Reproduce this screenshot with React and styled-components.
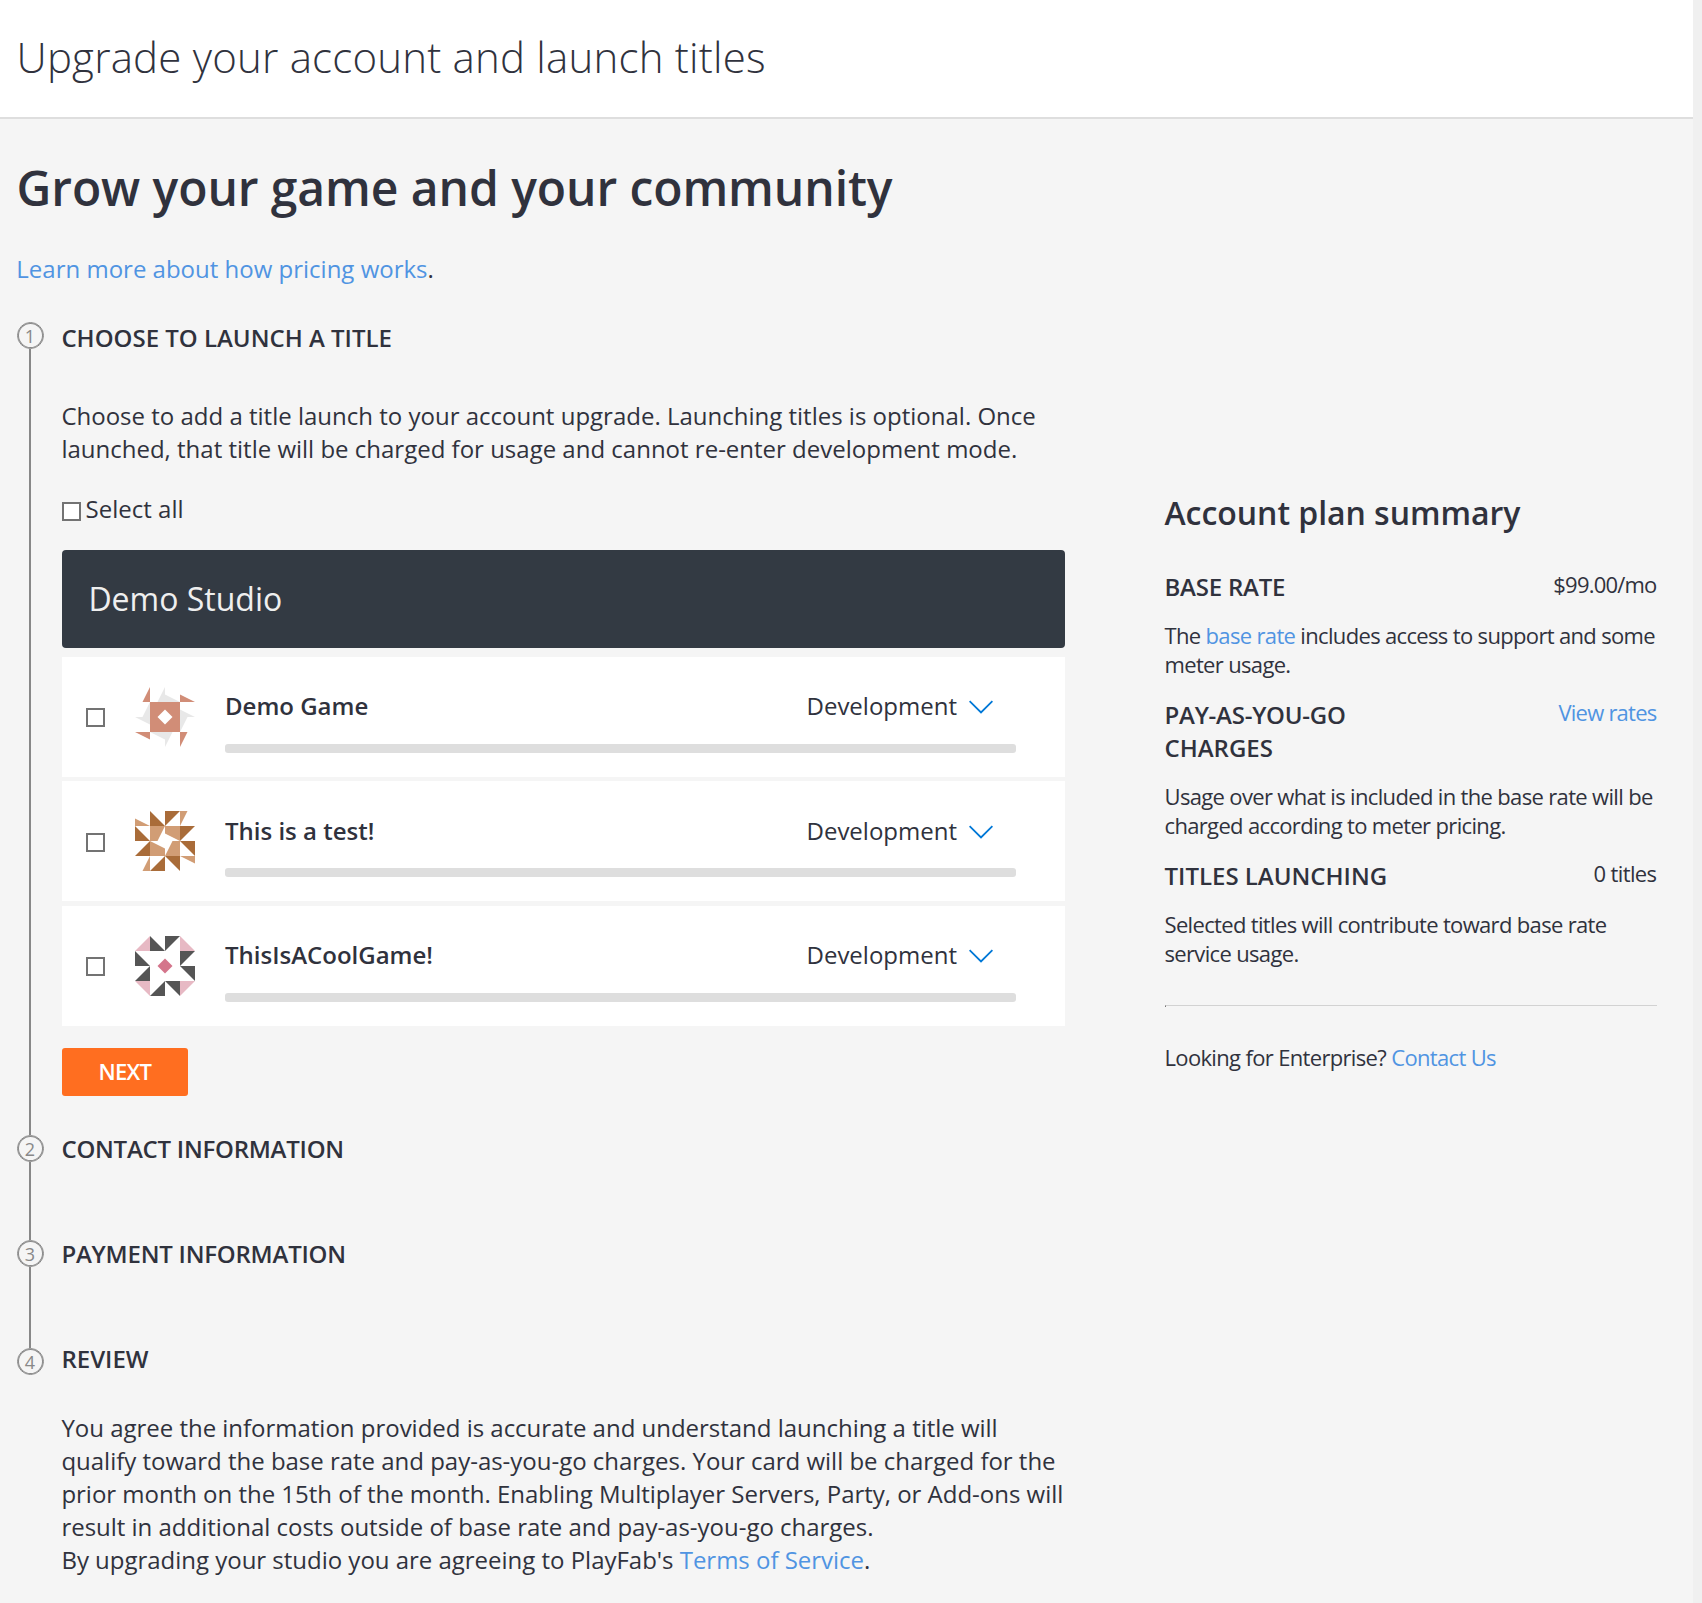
import React from 'react';
import styled, { createGlobalStyle } from 'styled-components';

const GlobalStyle = createGlobalStyle`
  *, *::before, *::after { box-sizing: border-box; }
  body {
    margin: 0;
    background: #f5f5f5;
    color: #30323d;
    font-family: "Open Sans", "Noto Sans", sans-serif;
    font-size: 24px;
    line-height: 33px;
  }
  h1, h2, h3, p { margin: 0; font-weight: 400; }
`;

const Page = styled.div`
  display: grid;
  grid-template-columns: 1693px 1fr;
  height: 1603px;
  overflow: hidden;
`;

const Gutter = styled.div`
  background: #f0f0f0;
`;

const Header = styled.header`
  height: 119px;
  padding: 28px 16.5px 0;
  background: #fff;
  border-bottom: 2px solid #dedede;
`;

const PageTitle = styled.h1`
  font-size: 42px;
  line-height: 57px;
  font-weight: 300 !important;
  letter-spacing: 0.2px;
`;

const Main = styled.main`
  padding: 36px 0 0 17px;
`;

const Headline = styled.h2`
  margin-left: -0.5px !important;
  font-size: 48px;
  line-height: 65px;
  font-weight: 600 !important;
  letter-spacing: -0.08px;
`;

const Intro = styled.p`
  margin: 32px 0 0 -0.7px !important;
`;

const Link = styled.a`
  color: #5094e2;
  text-decoration: none;
`;

const Columns = styled.div`
  display: grid;
  grid-template-columns: 1048px 492px;
  column-gap: 99.5px;
  margin-top: 37px;
`;

const Steps = styled.div`
  display: flex;
  flex-direction: column;
`;

const Step = styled.section`
  display: grid;
  grid-template-columns: 27px 1003px;
  column-gap: 18px;
  height: ${(p) => p.$height};
`;

const Rail = styled.div`
  display: flex;
  flex-direction: column;
`;

const StepNumber = styled.div`
  display: flex;
  align-items: center;
  justify-content: center;
  width: 27px;
  height: 27px;
  padding: 1px 1px 0 0;
  border: 1px solid #888;
  box-shadow: inset 0 0 0 1px #888;
  border-radius: 50%;
  color: #888;
  font-size: 18px;
  line-height: 24px;
`;

const RailLine = styled.div`
  flex: 1;
  width: 2px;
  margin-left: 12px;
  background: #888;
`;

const StepBody = styled.div`
  margin-top: ${(p) => -p.$lift}px;
`;

const StepTitle = styled.h3`
  margin-left: -0.6px !important;
  font-size: 24px;
  font-weight: 600 !important;
  letter-spacing: ${(p) => p.$tracking || 0}px;
  text-transform: uppercase;
`;

const Paragraph = styled.p`
  margin: ${(p) => p.$gap}px -4px 0 -0.6px !important;
  letter-spacing: ${(p) => p.$tracking || 0}px;
`;

const SelectAll = styled.label`
  display: flex;
  align-items: center;
  gap: 4.6px;
  margin-top: 27px;
`;

const Checkbox = styled.input.attrs({ type: 'checkbox' })`
  appearance: none;
  flex: none;
  width: 19px;
  height: 19px;
  margin: ${(p) => p.$drop || 0}px 0 0;
  border: 2px solid #737373;
  background: #fff;
`;

const Studio = styled.div`
  display: flex;
  align-items: center;
  height: 98px;
  margin-top: 25px;
  padding: 0 26.4px 2px;
  border-radius: 4px;
  background: #333a43;
  color: #efefef;
  font-size: 32px;
`;

const TitleList = styled.div`
  display: flex;
  flex-direction: column;
  gap: 4.4px;
  margin-top: 9px;
`;

const TitleRow = styled.div`
  display: flex;
  align-items: center;
  height: 120px;
  padding: 0 49px 0 24px;
  background: #fff;
`;

const Avatar = styled.svg`
  flex: none;
  width: 60px;
  height: 60px;
  margin: 0 30px;
`;

const TitleInfo = styled.div`
  flex: 1;
  padding-top: 8px;
`;

const TitleLine = styled.div`
  display: flex;
  align-items: center;
  justify-content: space-between;
  padding-right: 23px;
`;

const TitleName = styled.span`
  font-weight: 600;
`;

const Status = styled.span`
  display: flex;
  align-items: center;
  gap: 12px;
`;

const Chevron = styled.svg`
  width: 24px;
  height: 14px;
  margin-top: 3.6px;
`;

const Meter = styled.div`
  height: 9px;
  margin-top: 21.7px;
  border-radius: 3px;
  background: #dedede;
`;

const NextButton = styled.button`
  display: block;
  width: 126px;
  height: 48px;
  margin-top: 22.2px;
  padding: 0 0.4px 2px 0;
  border: 0;
  border-radius: 3px;
  background: #ff6e20;
  color: #fff;
  font: 600 22px/46px "Open Sans", "Noto Sans", sans-serif;
  letter-spacing: -0.75px;
`;

const Summary = styled.aside`
  padding-top: 170px;
  font-size: 22px;
  line-height: 29px;
  letter-spacing: -0.66px;
`;

const SummaryTitle = styled.h2`
  margin-bottom: 36px !important;
  font-size: 32px;
  line-height: 42px;
  font-weight: 600 !important;
  letter-spacing: -0.04px;
`;

const SummaryRow = styled.div`
  display: flex;
  justify-content: space-between;
`;

const SummaryLabel = styled.h3`
  max-width: 246px;
  font-size: 24px;
  line-height: 33px;
  font-weight: 600 !important;
  letter-spacing: 0;

  &::first-line {
    letter-spacing: ${(p) => p.$tracking || 0}px;
  }
`;

const SummaryValue = styled.span`
  letter-spacing: ${(p) => p.$tracking}px;
`;

const SummaryText = styled.p`
  margin: 18px 0 19px !important;
`;

const Divider = styled.hr`
  height: 2px;
  margin: 37px 0 36px;
  border-width: 1px 0 0 1px;
  border-style: solid;
  border-color: #d2d2d2 transparent transparent #777;
`;

function Shapes({ fill, points }) {
  return points.map((p) => <polygon key={p} points={p} fill={fill} />);
}

const pinwheel = [
  '15,0 15,15 30,15',
  '30,0 45,0 30,15',
  '45,15 60,15 45,30',
  '45,30 60,30 60,45',
  '30,45 45,45 45,60',
  '30,45 30,60 15,60',
  '0,15 0,30 15,30',
  '15,30 15,45 0,45',
];

const avatars = {
  coral: (
    <>
      <Shapes
        fill="#e8e8e8"
        points={[
          '30,0 30,7.5 45,15 22.5,15',
          '60,30 52.5,30 45,45 45,22.5',
          '30,60 30,52.5 15,45 37.5,45',
          '0,30 7.5,30 15,15 15,37.5',
        ]}
      />
      <Shapes
        fill="#d18d77"
        points={[
          '15,15 45,15 45,45 15,45',
          '15,0 15,15 7.5,15',
          '45,7.5 60,15 45,15',
          '45,45 52.5,45 45,60',
          '0,45 15,45 15,52.5',
        ]}
      />
      <Shapes fill="#fff" points={['30,22.5 37.5,30 30,37.5 22.5,30']} />
    </>
  ),
  brown: (
    <>
      <Shapes fill="#a96c39" points={pinwheel} />
      <Shapes
        fill="#d19d75"
        points={[
          '15,15 45,15 45,45 15,45',
          '0,7.5 0,15 15,15',
          '45,0 52.5,0 45,15',
          '45,45 60,45 60,52.5',
          '15,45 15,60 7.5,60',
        ]}
      />
      <Shapes
        fill="#fff"
        points={['30,15 30,22.5 45,30 37.5,30 30,45 30,37.5 15,30 22.5,30']}
      />
    </>
  ),
  rose: (
    <>
      <Shapes fill="#555" points={pinwheel} />
      <Shapes
        fill="#e7b9c4"
        points={[
          '0,15 15,0 15,15',
          '45,0 60,15 45,15',
          '45,45 60,45 45,60',
          '0,45 15,45 15,60',
        ]}
      />
      <Shapes fill="#d4758b" points={['30,22.5 37.5,30 30,37.5 22.5,30']} />
    </>
  ),
};

const titles = [
  { name: 'Demo Game', avatar: 'coral' },
  { name: 'This is a test!', avatar: 'brown' },
  { name: 'ThisIsACoolGame!', avatar: 'rose' },
];

function StepSection({ number, title, height, lift, tracking, last, children }) {
  return (
    <Step $height={height}>
      <Rail>
        <StepNumber>{number}</StepNumber>
        {!last && <RailLine />}
      </Rail>
      <StepBody $lift={lift}>
        <StepTitle $tracking={tracking}>{title}</StepTitle>
        {children}
      </StepBody>
    </Step>
  );
}

function SummaryItem({ label, value, labelTracking, valueTracking, children }) {
  return (
    <>
      <SummaryRow>
        <SummaryLabel $tracking={labelTracking}>{label}</SummaryLabel>
        <SummaryValue $tracking={valueTracking}>{value}</SummaryValue>
      </SummaryRow>
      <SummaryText>{children}</SummaryText>
    </>
  );
}

export default function App() {
  return (
    <Page>
      <GlobalStyle />
      <div>
        <Header>
          <PageTitle>Upgrade your account and launch titles</PageTitle>
        </Header>
        <Main>
          <Headline>Grow your game and your community</Headline>
          <Intro>
            <Link>Learn more about how pricing works</Link>.
          </Intro>
          <Columns>
            <Steps>
              <StepSection number={1} title="Choose to launch a title" height="813px" lift={1}>
                <Paragraph $gap={45}>
                  Choose to add a title launch to your account upgrade. Launching titles is
                  optional. Once launched, that title will be charged for usage and cannot
                  re-enter development mode.
                </Paragraph>
                <SelectAll>
                  <Checkbox $drop={6} />
                  Select all
                </SelectAll>
                <Studio>Demo Studio</Studio>
                <TitleList>
                  {titles.map((t) => (
                    <TitleRow key={t.name}>
                      <Checkbox $drop={1.3} />
                      <Avatar viewBox="0 0 60 60">{avatars[t.avatar]}</Avatar>
                      <TitleInfo>
                        <TitleLine>
                          <TitleName>{t.name}</TitleName>
                          <Status>
                            Development
                            <Chevron viewBox="0 0 24 14" fill="none" stroke="#0078d7" strokeWidth="1.8">
                              <path d="M0.6 1.2 12 12.4 23.4 1.2" />
                            </Chevron>
                          </Status>
                        </TitleLine>
                        <Meter />
                      </TitleInfo>
                    </TitleRow>
                  ))}
                </TitleList>
                <NextButton>NEXT</NextButton>
              </StepSection>
              <StepSection
                number={2}
                title="Contact information"
                height="105px"
                lift={3}
                tracking={-0.24}
              />
              <StepSection
                number={3}
                title="Payment information"
                height="108px"
                lift={3}
                tracking={-0.22}
              />
              <StepSection number={4} title="Review" height="auto" lift={6} last>
                <Paragraph $gap={36} $tracking={-0.018}>
                  You agree the information provided is accurate and understand launching a
                  title will qualify toward the base rate and pay-as-you-go charges. Your card
                  will be charged for the prior month on the 15th of the month. Enabling
                  Multiplayer Servers, Party, or Add-ons will result in additional costs outside
                  of base rate and pay-as-you-go charges.
                  <br />
                  By upgrading your studio you are agreeing to PlayFab's{' '}
                  <Link>Terms of Service</Link>.
                </Paragraph>
              </StepSection>
            </Steps>
            <Summary>
              <SummaryTitle>Account plan summary</SummaryTitle>
              <SummaryItem
                label="BASE RATE"
                value="$99.00/mo"
                labelTracking={-0.22}
                valueTracking={-0.8}
              >
                The <Link>base rate</Link> includes access to support and some meter usage.
              </SummaryItem>
              <SummaryItem
                label="PAY-AS-YOU-GO CHARGES"
                value={<Link>View rates</Link>}
                labelTracking={-0.24}
                valueTracking={-0.76}
              >
                Usage over what is included in the base rate will be charged according to meter
                pricing.
              </SummaryItem>
              <SummaryItem label="TITLES LAUNCHING" value="0 titles" valueTracking={-0.6}>
                Selected titles will contribute toward base rate service usage.
              </SummaryItem>
              <Divider />
              <p>
                Looking for Enterprise? <Link>Contact Us</Link>
              </p>
            </Summary>
          </Columns>
        </Main>
      </div>
      <Gutter />
    </Page>
  );
}
